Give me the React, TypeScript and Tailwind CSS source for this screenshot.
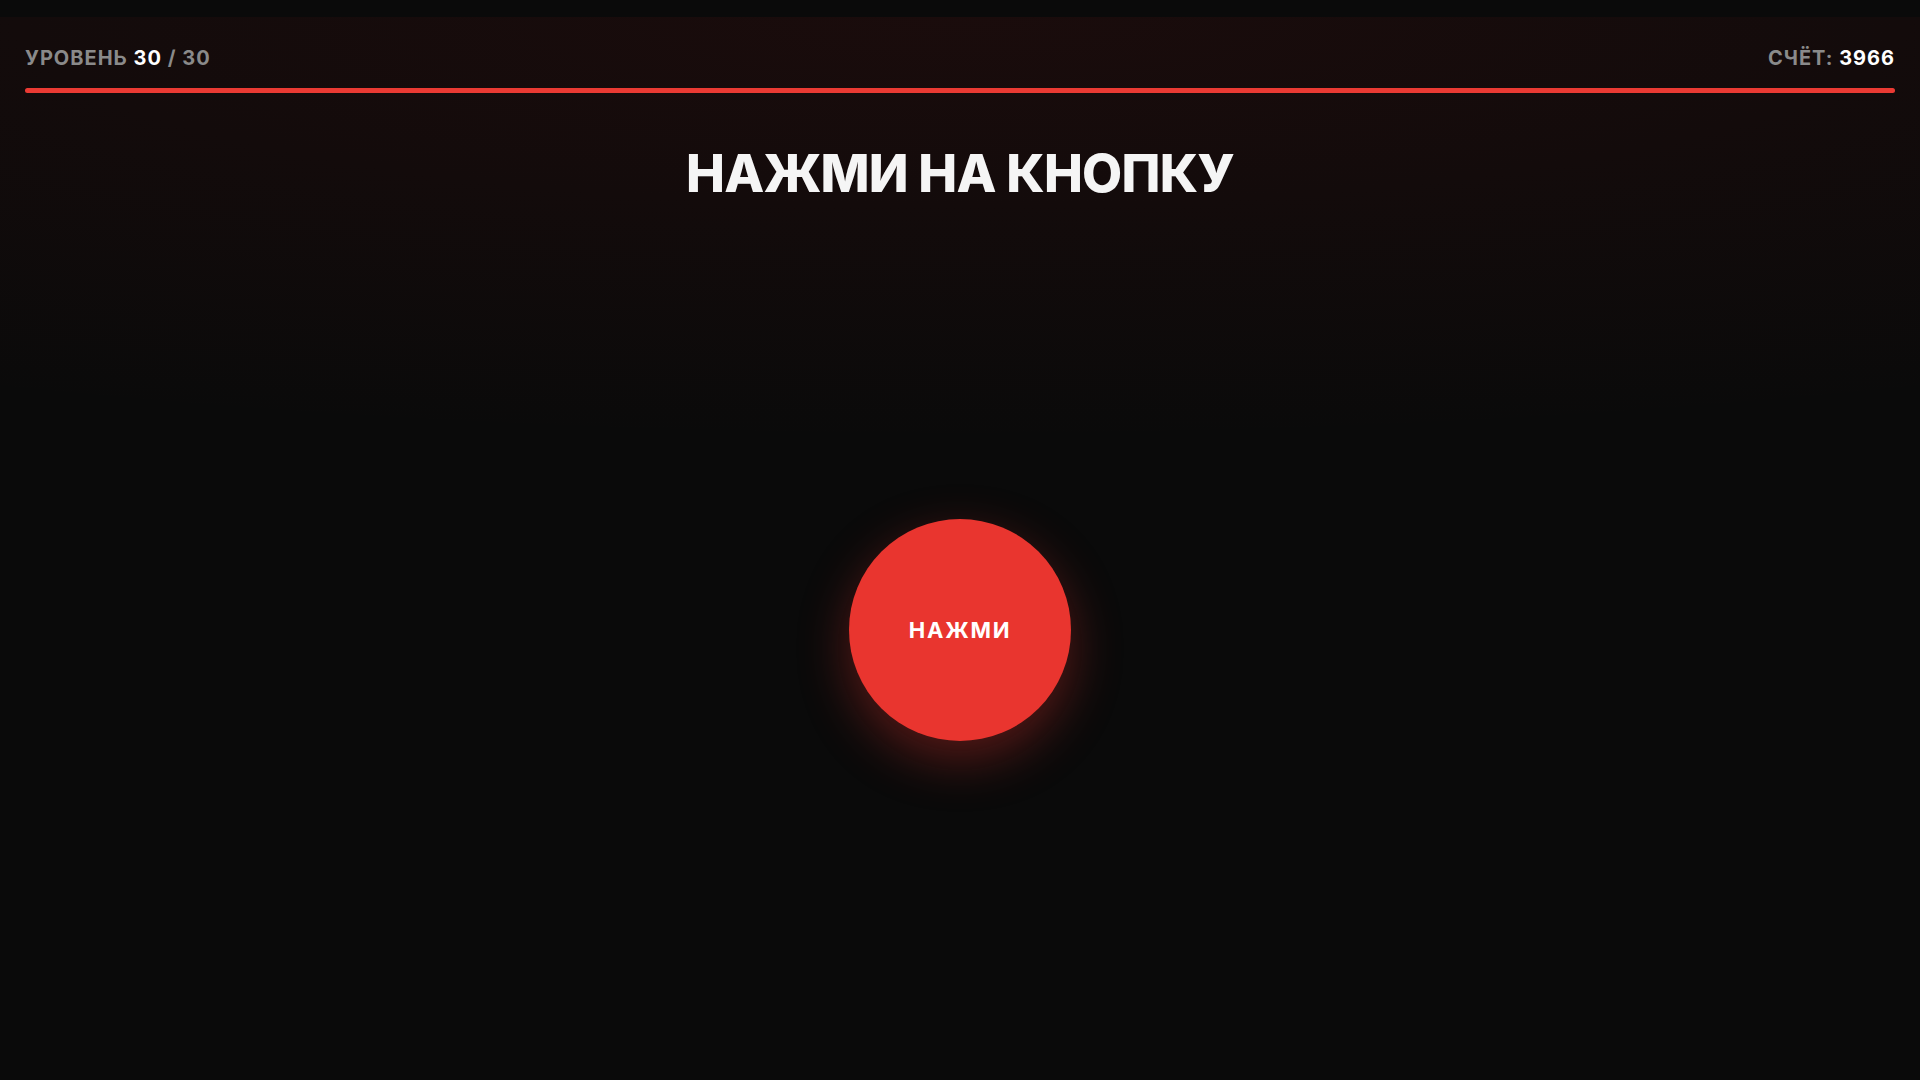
export default function App() {
  return (
    <div
      className="min-h-screen w-full bg-[#0a0a0a] text-white"
      style={{ fontFamily: 'Inter, "Noto Sans", sans-serif' }}
    >
      <div className="h-[17px] bg-[#0a0a0a]" />
      <main className="flex min-h-[1063px] flex-col bg-[radial-gradient(ellipse_110%_40%_at_50%_0%,rgba(190,30,30,0.09),rgba(10,10,10,0)_100%)]">
        <header className="px-[25px] pt-[29px]">
          <div className="flex items-center justify-between text-[20px] leading-[24px] font-bold tracking-[0.05em]">
            <span className="text-[#8a8a8a]">
              УРОВЕНЬ <span className="text-white">30</span> / 30
            </span>
            <span className="text-[#8a8a8a]">
              СЧЁТ: <span className="text-white">3966</span>
            </span>
          </div>
          <div className="mt-[18px] h-[5px] w-full rounded-full bg-[#2a1414]">
            <div className="h-full rounded-full bg-[#ea3a33]" style={{ width: '100%' }} />
          </div>
        </header>

        <h1 className="mt-[55px] text-center text-[52px] leading-[52px] font-extrabold tracking-[-0.015em] text-[#f5f5f5]">
          НАЖМИ НА КНОПКУ
        </h1>

        <div className="mt-[319px] flex justify-center">
          <button className="flex h-[222px] w-[222px] items-center justify-center rounded-full bg-[#e9352f] text-[22px] font-bold tracking-[0.08em] text-white shadow-[0_18px_50px_rgba(233,53,47,0.35)]">
            НАЖМИ
          </button>
        </div>
      </main>
    </div>
  );
}
